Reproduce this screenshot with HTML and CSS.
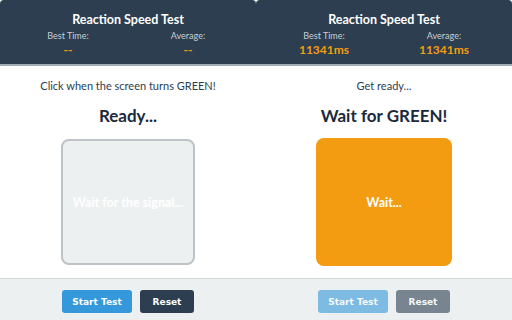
FILE: index.html
```html
<!DOCTYPE html>
<html lang="en">
<head>
    <meta charset="UTF-8">
    <title>Reaction Speed Test</title>
    <link rel="stylesheet" href="styles.css">
</head>
<body>
    <div class="app">
        <div class="panel">
            <header class="top">
                <h1>Reaction Speed Test</h1>
                <div class="stats">
                    <div class="stat">
                        <span class="label">Best Time:</span>
                        <span class="value">--</span>
                    </div>
                    <div class="stat">
                        <span class="label">Average:</span>
                        <span class="value">--</span>
                    </div>
                </div>
            </header>
            <main class="content">
                <p class="hint">Click when the screen turns GREEN!</p>
                <h2 class="status">Ready...</h2>
                <div class="pad idle">Wait for the signal...</div>
            </main>
            <footer class="controls">
                <button class="btn start">Start Test</button>
                <button class="btn reset">Reset</button>
            </footer>
        </div>

        <div class="panel">
            <header class="top">
                <h1>Reaction Speed Test</h1>
                <div class="stats">
                    <div class="stat">
                        <span class="label">Best Time:</span>
                        <span class="value">11341ms</span>
                    </div>
                    <div class="stat">
                        <span class="label">Average:</span>
                        <span class="value">11341ms</span>
                    </div>
                </div>
            </header>
            <main class="content">
                <p class="hint">Get ready...</p>
                <h2 class="status">Wait for GREEN!</h2>
                <div class="pad waiting">Wait...</div>
            </main>
            <footer class="controls">
                <button class="btn start" disabled>Start Test</button>
                <button class="btn reset" disabled>Reset</button>
            </footer>
        </div>
    </div>
</body>
</html>
```

FILE: styles.css
```css
body {
    margin: 0;
    background: #fff;
    font-family: Lato, "Open Sans", Arial, sans-serif;
}
.app {
    display: flex;
    width: 512px;
    height: 320px;
}
.panel {
    display: flex;
    flex-direction: column;
    width: 256px;
    height: 320px;
}
.top {
    height: 64px;
    background: #2c3e50;
    border-radius: 4px 4px 0 0;
    border-bottom: 2px solid #a3adb8;
    color: #fff;
    text-align: center;
}
.top h1 {
    margin: 0;
    padding-top: 11px;
    font-size: 12.5px;
    line-height: 18px;
    font-weight: 700;
}
.stats {
    display: flex;
    justify-content: space-around;
    padding: 0 8px;
    margin-top: 1px;
}
.stat {
    display: flex;
    flex-direction: column;
    align-items: center;
    width: 80px;
}
.label {
    font-size: 9px;
    line-height: 12px;
    color: #c8cfd6;
}
.value {
    font-size: 12px;
    line-height: 15px;
    font-weight: 700;
    color: #f39c12;
}
.content {
    flex: 1;
    display: flex;
    flex-direction: column;
    align-items: center;
}
.hint {
    margin: 13px 0 0;
    font-size: 11px;
    line-height: 14px;
    color: #2c3e50;
}
.status {
    margin: 12px 0 0;
    font-size: 17px;
    line-height: 22px;
    font-weight: 700;
    color: #1b2a3b;
}
.pad {
    display: flex;
    justify-content: center;
    align-items: center;
    margin-top: 11px;
    border-radius: 8px;
    color: #fff;
    font-size: 12.5px;
    font-weight: 700;
    box-sizing: border-box;
}
.pad.idle {
    width: 134px;
    height: 126px;
    margin-top: 12px;
    background: #ecf0f1;
    border: 2px solid #bdc3c7;
}
.pad.waiting {
    width: 136px;
    height: 128px;
    background: #f39c12;
}
.controls {
    display: flex;
    justify-content: center;
    gap: 8px;
    height: 30px;
    padding-top: 11px;
    background: #ecf0f1;
    border-top: 1px solid #d5dbdd;
}
.btn {
    height: 23px;
    padding: 0;
    border: none;
    border-radius: 3px;
    color: #fff;
    font-family: "DejaVu Sans", Verdana, sans-serif;
    font-size: 9px;
    font-weight: 700;
}
.btn.start {
    width: 70px;
    background: #3498db;
}
.btn.reset {
    width: 54px;
    background: #2c3e50;
}
.btn:disabled {
    opacity: 0.6;
}
```
